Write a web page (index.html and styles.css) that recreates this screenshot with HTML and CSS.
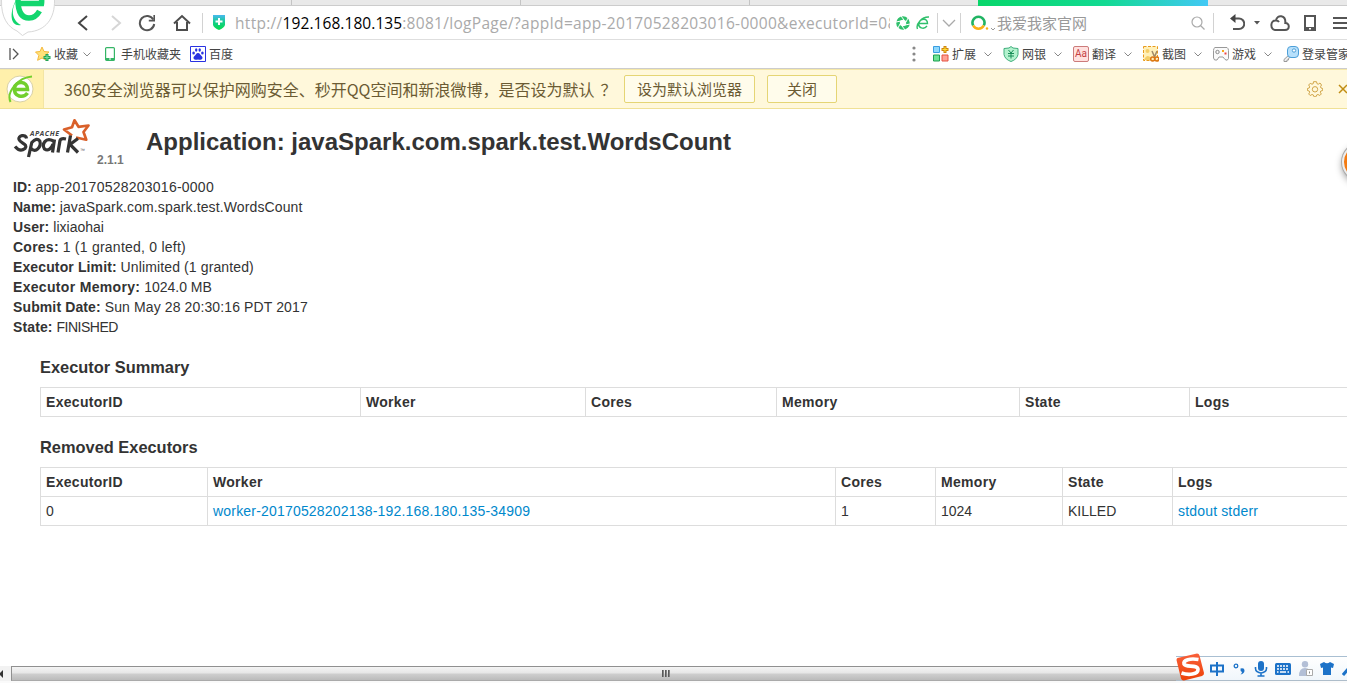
FILE: index.html
```
<!DOCTYPE html>
<html lang="zh-CN">
<head>
<meta charset="utf-8">
<title>Application: javaSpark.com.spark.test.WordsCount</title>
<link rel="stylesheet" href="styles.css">
</head>
<body>
<div class="window">
  <div class="tabstrip"><i></i><i></i><i></i><i></i><b class="progress"></b></div>

  <div class="navbar">
    <svg class="ic" width="14" height="16" viewBox="0 0 14 16" fill="none" stroke="#444" stroke-width="2"><path d="M11 1 3 8l8 7"/></svg>
    <svg class="ic forward" width="12" height="16" viewBox="0 0 12 16" fill="none" stroke="#d6d6d6" stroke-width="2"><path d="m1 1 8 7-8 7"/></svg>
    <svg class="ic reload" width="18" height="18" viewBox="0 0 18 18" fill="none" stroke="#555" stroke-width="2"><path d="M15.300 5.500A7.200 7.200 0 1 0 16.200 10"/><path d="M16.200 1v5.600h-5.400" stroke-width="1.600"/></svg>
    <svg class="ic home" width="18" height="18" viewBox="0 0 18 18" fill="none" stroke="#4d4d4d" stroke-width="2"><path d="M1 9.500 9 2l8 7.500M4 8v8h10V8"/></svg>
    <span class="divider d1"></span>
    <svg class="ic shield" width="12" height="15" viewBox="0 0 12 15"><defs><linearGradient id="sh" x2="0" y2="1"><stop stop-color="#48b8ef"/><stop offset=".5" stop-color="#12ce87"/><stop offset="1" stop-color="#08db4c"/></linearGradient></defs><path d="M0 0h12v10q-1 3-6 5-5-2-6-5z" fill="url(#sh)"/><path d="M6 3v7M2.500 6.500h7" stroke="#fff" stroke-width="2"/></svg>
    <div class="url"><span class="scheme">http://</span><span class="host">192.168.180.135</span><span class="path">:8081/logPage/?appId=app-20170528203016-0000&amp;executorId=0&amp;</span></div>
    <svg class="ic aperture" width="14" height="14" viewBox="0 0 14 14"><circle cx="7" cy="7" r="5" fill="none" stroke="#2fc06b" stroke-width="3.600"/><path d="m5 0 3 4M12 2l-2 4M14 8l-5 1M9 14l-3-4M2 12l2-4M0 6l5-1" stroke="#fff" stroke-width="1"/></svg>
    <svg class="ic eico" width="14" height="14" viewBox="0 0 14 14" fill="none" stroke="#2fc06b" stroke-width="1.400"><path d="M3.500 7.500h8c0-6-7-5-8.500-.500-1.500 5 5 7 8 3M1.500 13C-.500 8 6 .500 13 1"/></svg>
    <span class="divider d2"></span>
    <svg class="ic drop" width="14" height="8" viewBox="0 0 14 8" fill="none" stroke="#aaa" stroke-width="1.300"><path d="m1 1 6 6 6-6"/></svg>
    <span class="divider d3"></span>
    <svg class="ic engine" width="26" height="16" viewBox="0 0 26 16" fill="none" stroke-width="2.600"><path d="M2.200 10.500a6 6 0 1 1 10.600 0" stroke="#20b463"/><path d="M2.200 10.500a6 6 0 0 0 10.600 0" stroke="#fbb116"/><circle cx="16" cy="13.500" r="1.200" fill="#fbb116" stroke="none"/><path d="m20 13 2 2 2-2" stroke="#999" stroke-width="1"/></svg>
    <span class="query">我爱我家官网</span>
    <svg class="ic search" width="14" height="14" viewBox="0 0 14 14" fill="none" stroke="#aaa" stroke-width="1.200"><circle cx="6" cy="6" r="5"/><path d="m9.500 9.500 4 4"/></svg>
    <span class="divider d4"></span>
    <svg class="ic undo" width="15" height="17" viewBox="0 0 15 17" fill="none" stroke="#555" stroke-width="2"><path d="M2 4.500h7a5 5 0 0 1 0 10.500H3"/><path d="M0 4.500 5.500 0v9z" fill="#444" stroke="none"/></svg>
    <svg class="ic caret" width="6" height="4" viewBox="0 0 6 4"><path d="M0 0h6L3 3.500z" fill="#555"/></svg>
    <svg class="ic cloud" width="20" height="16" viewBox="0 0 20 16" fill="none" stroke="#555" stroke-width="2"><path d="M5 15h10c5 0 5-7 .300-7C16 0 7-1 6 5.500 0 5 0 14 5 15ZM6 5.500q2 0 3 1.500"/></svg>
    <svg class="ic phone" width="12" height="16" viewBox="0 0 12 16"><path d="M0 0h12v16H0zM2 2v10h8V2zM5 13v1.500h2V13z" fill="#555" fill-rule="evenodd"/></svg>
    <svg class="ic burger" width="16" height="12" viewBox="0 0 16 12"><path d="M0 1h16M0 6h16M0 11h16" stroke="#555" stroke-width="2"/></svg>
  </div>

  <div class="bookmarks">
    <svg class="ic" width="11" height="12" viewBox="0 0 11 12" fill="none" stroke="#555" stroke-width="1.300"><path d="M1 0v12M4 1l5 5-5 5"/></svg>
    <svg class="ic star" width="16" height="16" viewBox="0 0 16 16"><path d="m7 1 2 4.500 5 .500-3.800 3.300 1.200 5L7 12l-4.400 2.300 1.200-5L.500 6l4.500-.500z" fill="#ffe27a" stroke="#f5b93d"/><path d="M12 8v7M8.500 11.500h7" stroke="#22a458" stroke-width="3"/><path d="M12 9v5M9.500 11.500h5" stroke="#7cdf9e"/></svg>
    <span class="lbl">收藏</span>
    <svg class="ic chev" width="8" height="5" viewBox="0 0 8 5"><path d="m.5.5 3.500 3.500L7.500.5" fill="none" stroke="#888"/></svg>
    <svg class="ic mobile" width="10" height="14" viewBox="0 0 10 14"><rect x=".6" y=".6" width="8.800" height="12.800" rx="1" fill="#fff" stroke="#35b566" stroke-width="1.200"/><path d="M1 11h8v2H1z" fill="#35b566"/><path d="M4 12h2" stroke="#fff"/></svg>
    <span class="lbl">手机收藏夹</span>
    <svg class="ic paw" width="16" height="16" viewBox="0 0 16 16"><path d="M.5.5h15v15H.5z" fill="#fff" stroke="#2932e1"/><g fill="#2932e1"><ellipse cx="3.600" cy="7" rx="1.300" ry="1.600"/><ellipse cx="6.200" cy="4" rx="1.200" ry="1.700"/><ellipse cx="9.700" cy="4" rx="1.200" ry="1.700"/><ellipse cx="12.400" cy="7" rx="1.300" ry="1.600"/><path d="M8 7c2 0 2 2 4 3.500 1.500 2-.500 4-4 3-3.500 1-5.500-1-4-3C6 9 6 7 8 7"/></g></svg>
    <span class="lbl">百度</span>
    <div class="tools">
      <svg class="ic dots" width="4" height="16" viewBox="0 0 4 16" fill="#888"><circle cx="2" cy="2" r="1.600"/><circle cx="2" cy="8" r="1.600"/><circle cx="2" cy="14" r="1.600"/></svg>
      <div class="tool"><svg width="16" height="16" viewBox="0 0 16 16"><path d="M.5.5h6v6h-6z" fill="#8ed8fc" stroke="#3a9de0"/><path d="M.5 9h6v6h-6z" fill="#6be394" stroke="#1f9f50"/><path d="M9 9h6v6H9z" fill="#ffa193" stroke="#e45242"/><path d="M12 0v7M8.500 3.500h7" stroke="#cf850c" stroke-width="3"/><path d="M12 1v5M9.500 3.500h5" stroke="#ffdf36"/></svg><span>扩展</span><svg class="chev" width="8" height="5" viewBox="0 0 8 5"><path d="m.5.5 3.500 3.500L7.500.5" fill="none" stroke="#888"/></svg></div>
      <div class="tool"><svg width="16" height="16" viewBox="0 0 16 16"><path d="m8 .5 2 1.500 5 .5v6q-1 5-7 7-6-2-7-7v-6L6 2z" fill="#b3f2ce" stroke="#3fae7c"/><path d="m5.500 4 2.500 3 2.500-3M5 7.500h6M5 10h6M8 7v5.500" fill="none" stroke="#168d56"/></svg><span>网银</span><svg class="chev" width="8" height="5" viewBox="0 0 8 5"><path d="m.5.5 3.500 3.500L7.500.5" fill="none" stroke="#888"/></svg></div>
      <div class="tool"><span class="aa">Aa</span><span>翻译</span><svg class="chev" width="8" height="5" viewBox="0 0 8 5"><path d="m.5.5 3.500 3.500L7.500.5" fill="none" stroke="#888"/></svg></div>
      <div class="tool"><svg width="16" height="16" viewBox="0 0 16 16"><path d="M.5.5h14v14H.5z" fill="#fff0b8" stroke="#e89a1c" stroke-dasharray="3 1.500"/><circle cx="4.500" cy="5" r="2" fill="#f5ce69"/><path d="M1 14q3-7 7-2v2z" fill="#f5ce69"/><path d="m9 5 3 7M14 5l-3 7" stroke="#a08a67" stroke-width="1.500"/><circle cx="9.700" cy="13" r="2" fill="none" stroke="#dc7815" stroke-width="1.500"/><circle cx="13.800" cy="13" r="2" fill="none" stroke="#dc7815" stroke-width="1.500"/></svg><span>截图</span><svg class="chev" width="8" height="5" viewBox="0 0 8 5"><path d="m.5.5 3.500 3.500L7.500.5" fill="none" stroke="#888"/></svg></div>
      <div class="tool"><svg width="16" height="16" viewBox="0 0 16 16"><path d="M2 1.500h12q1.500 1 1.500 3v8q-1 3-3.500 1l-2-2.500H6L4 14q-3 1-3.500-2V4.500Q.5 2 2 1.500" fill="#fafafa" stroke="#999"/><circle cx="4.500" cy="6" r="1.700" fill="none" stroke="#888"/><path d="M9 4h2v2H9z" fill="#f8a91b"/><path d="M11.500 6.500h2v2h-2z" fill="#e44"/></svg><span>游戏</span><svg class="chev" width="8" height="5" viewBox="0 0 8 5"><path d="m.5.5 3.500 3.500L7.500.5" fill="none" stroke="#888"/></svg></div>
      <div class="tool"><svg width="16" height="16" viewBox="0 0 16 16"><path d="m7 8-6 5.500v2h3V14h1.500v-1.500L9 10" fill="#eee" stroke="#999"/><rect x="4.500" y=".5" width="11" height="11" rx="3.500" fill="#b7e0fb" stroke="#4d9fd8"/><circle cx="11" cy="4.500" r="1.700" fill="#fff" stroke="#4d9fd8"/></svg><span>登录管家</span></div>
    </div>
  </div>

  <div class="notice">
    <div class="brand"><svg width="28" height="30" viewBox="0 0 28 30"><circle cx="14" cy="15" r="13" fill="#fff" stroke="#d9d1a6"/><path d="M9 15.500h12.500C21.500 6.500 10 6.500 8.500 14 7.500 23 17.500 24.500 21.500 19" fill="none" stroke="#72cf2d" stroke-width="3.600"/><path d="M4.500 28C0 18 12 3.500 26 2.500" fill="none" stroke="#72cf2d" stroke-width="2"/></svg></div>
    <span class="msg">360安全浏览器可以保护网购安全、秒开QQ空间和新浪微博，是否设为默认<span class="mark">？</span></span>
    <button class="btn set">设为默认浏览器</button>
    <button class="btn close">关闭</button>
    <svg class="gear" width="16" height="16" viewBox="0 0 16 16" fill="none" stroke="#d0a548"><path d="m6.500.7 3 0 .5 2 1.300.5L13 2l1.500 2-1 1.800.5 1.200 1.700.5v2l-1.900.5-.5 1.200 1 1.800-1.500 1.500-1.800-1-1.400.5-.6 1.800h-2L6.400 14 5 13.500l-1.800 1L1.700 13l1-1.800L2.200 10 .4 9.500v-2L2.200 7l.5-1.200L1.700 4l1.500-1.700L5 3.200l1.200-.5z"/><circle cx="8" cy="8.300" r="2.700"/></svg>
    <svg class="cross" width="10" height="10" viewBox="0 0 10 10"><path d="m1 1 8 8m0-8-8 8" stroke="#c08c12" stroke-width="1.500"/></svg>
  </div>

  <main class="page">
    <header class="title">
      <svg class="spark" width="78" height="40" viewBox="0 0 78 40">
        <path d="M59 17.500 51 11.500 59 9.200 61.500 2.300 65.500 8.800 75.500 7.500 70.500 14 73.300 21.700 63 19.500" fill="none" stroke="#d9602a" stroke-width="2.700" stroke-linejoin="round"/>
        <g fill="none" stroke="#343434" stroke-width="3.200"><path d="M13.500 20.500C13 15.500 4.500 17.500 6 21.500S15.500 26 12 30.500Q7 34.500 2 28.500"/><path d="m15.500 39 3.300-14.500q5-5.500 8-1.500c2 6-4.500 12.500-8.500 7.500"/><path d="M41.500 21.500l-2 13M40.500 23c-8-4.500-12 3.500-9 8 3.500 2.500 7-.500 8.500-5"/><path d="m45 34.500 2-12q1-2.500 6-1.500"/><path d="m54.500 34.500 3-17M65 20.500 57 26.500 65 34.500"/></g>
        <text class="apache" x="17" y="18" textLength="29">APACHE</text><text class="tm" x="67" y="34">™</text>
      </svg>
      <span class="version">2.1.1</span>
      <h3>Application: javaSpark.com.spark.test.WordsCount</h3>
    </header>
    <ul class="facts">
      <li><strong>ID:</strong> <span class="wide">app-20170528203016-0000</span></li>
      <li><strong>Name:</strong> <span class="slight">javaSpark.com.spark.test.WordsCount</span></li>
      <li><strong class="slight">User:</strong> <span>lixiaohai</span></li>
      <li><strong class="wide">Cores:</strong> <span class="wide">1 (1 granted, 0 left)</span></li>
      <li><strong class="slight">Executor Limit:</strong> <span class="slight">Unlimited (1 granted)</span></li>
      <li><strong class="wider">Executor Memory:</strong> <span>1024.0 MB</span></li>
      <li><strong class="slight">Submit Date:</strong> <span class="slight">Sun May 28 20:30:16 PDT 2017</span></li>
      <li><strong class="slight">State:</strong> <span class="tight">FINISHED</span></li>
    </ul>
    <section class="tables">
      <h4>Executor Summary</h4>
      <table class="summary">
        <colgroup><col><col><col><col><col><col></colgroup>
        <tr><th>ExecutorID</th><th>Worker</th><th>Cores</th><th>Memory</th><th>State</th><th>Logs</th></tr>
      </table>
      <h4>Removed Executors</h4>
      <table class="removed">
        <colgroup><col><col><col><col><col><col></colgroup>
        <tr><th>ExecutorID</th><th>Worker</th><th>Cores</th><th>Memory</th><th>State</th><th>Logs</th></tr>
        <tr><td>0</td><td><a>worker-20170528202138-192.168.180.135-34909</a></td><td>1</td><td>1024</td><td>KILLED</td><td><a>stdout</a> <a>stderr</a></td></tr>
      </table>
    </section>
  </main>

  <div class="scrollbar">
    <div class="arrow"><svg width="4" height="8" viewBox="0 0 4 8"><path d="M3 0v8L-1 4z" fill="#333"/></svg></div>
    <div class="thumb"><i></i><i></i><i></i></div>
  </div>

  <svg class="bubble" width="58" height="38" viewBox="0 0 58 38">
    <path d="M1.500 0C1 18 8 27 17 31l5.500 4.500L28 32C46 31 55 18 54.500 0" fill="#fff" stroke="#d8d8d8"/>
    <path d="M20 3.500h21.500c.300-2 .300-3 0-5M18 0c0 14 5 18 11 18 5 0 8-2.500 10.500-7" fill="none" stroke="#12d66e" stroke-width="5.500"/>
    <path d="M17 0C11 8 11 20 21 25 11 27 9 15 15 2z" fill="#12d66e"/>
  </svg>
  <div class="float-ball"></div>
  <div class="ime">
    <svg class="sogou" width="30" height="30" viewBox="0 0 30 30"><defs><linearGradient id="so" x2="0" y2="1"><stop stop-color="#f9603a"/><stop offset="1" stop-color="#ed4208"/></linearGradient></defs><path d="M1.500 6 21 1.500q2 0 2.500 2L28 21q.300 2-2 3L8 28.500q-2 .500-3-2L.500 8q0-1.500 1-2" fill="url(#so)"/><path d="M22.500 7.500C14 6 7 8 8 12c1.500 4 14 0 14 5.500 0 5-9.500 6-16.500 3.500" fill="none" stroke="#fff" stroke-width="3.600"/></svg>
    <svg class="zh" width="16" height="14" viewBox="0 0 16 14" fill="none" stroke="#1c72c8" stroke-width="2"><path d="M2 3.500h12v6H2zM8 0v14"/></svg>
    <svg class="punc" width="12" height="12" viewBox="0 0 12 12"><circle cx="3" cy="3" r="1.800" fill="none" stroke="#1c72c8" stroke-width="1.300"/><path d="M7.500 5.500q4-1 4 2 0 3-4 4 1.500-1.500 1.500-2.500-2-1-1.500-3.500" fill="#1c72c8"/></svg>
    <svg class="mic" width="14" height="16" viewBox="0 0 14 16"><rect x="4" width="6" height="10" rx="3" fill="#1c72c8"/><path d="M1.500 6v1.500a5.500 4.500 0 0 0 11 0V6M7 12v3M3.500 15h7" fill="none" stroke="#1c72c8" stroke-width="1.600"/></svg>
    <svg class="kbd" width="16" height="12" viewBox="0 0 16 12"><rect width="16" height="12" rx="1.500" fill="#1c72c8"/><path d="M2 3h12M2 6h12" stroke="#fff" stroke-width="1.500" stroke-dasharray="2 1"/><path d="M2 9h1.500M5 9h6M12.500 9H14" stroke="#fff" stroke-width="1.500"/></svg>
    <svg class="user" width="14" height="15" viewBox="0 0 14 15"><circle cx="6" cy="3.300" r="3.200" fill="#b3bfd6"/><path d="M0 15q0-8 6-8t6 8z" fill="#b3bfd6"/><path d="M7.500 8.500h6v6h-6z" fill="#fff" stroke="#aaa"/><path d="M10 10.500v2h1v-2z" fill="#888"/></svg>
    <svg class="shirt" width="14" height="13" viewBox="0 0 14 13"><path d="M0 2 4 0q3 2.500 6 0l4 2-1 4-2-.500V13H3V5.500L1 6z" fill="#1c72c8"/></svg>
    <svg class="wrench" width="6" height="14" viewBox="0 0 6 14"><path d="m1 13 6-7" stroke="#1c72c8" stroke-width="3"/></svg>
  </div>
</div>
</body>
</html>
```
FILE: styles.css
```
* { box-sizing: border-box; }
body { margin: 0; }
.window {
  position: relative;
  display: flex;
  flex-direction: column;
  width: 1347px;
  height: 683px;
  overflow: hidden;
  background: #fff;
  font-family: "Liberation Sans", "Noto Sans CJK SC", sans-serif;
}
svg { display: block; flex: none; }

/* browser chrome */
.tabstrip { display: flex; height: 6px; flex: none; background: #e9e9e9; border-bottom: 1px solid #ccc; }
.tabstrip i { width: 229px; border-right: 1px solid #c4c4c4; }
.tabstrip i:first-child { width: 292px; }
.tabstrip i:nth-child(4) { width: 228px; border: 0; }
.progress { width: 230px; height: 6px; background: linear-gradient(90deg, #08d66a, #12da92 55%, #42c8f5); }

.navbar { display: flex; align-items: center; height: 34px; flex: none; padding-left: 76px; border-bottom: 1px solid #dedede; }
.navbar > *, .notice > * { flex-shrink: 0; }
.forward { margin-left: 21px; }
.reload { margin-left: 15px; }
.home { margin-left: 17px; }
.divider { width: 1px; height: 20px; background: #d2d2d2; }
.d1 { margin-left: 11px; }
.shield { margin-left: 10px; }
.url { width: 655px; height: 24px; margin-left: 10px; overflow: hidden; white-space: nowrap; font: 15.500px/24px "Open Sans", sans-serif; color: #aaa; }
.scheme, .path { letter-spacing: .3px; }
.host { color: #000; letter-spacing: .07px; }
.aperture { margin-left: 6px; }
.eico { margin-left: 6px; }
.d2 { margin-left: 7px; }
.drop { margin-left: 4px; }
.d3 { margin-left: 4px; }
.engine { margin-left: 10px; }
.query { width: 90px; margin-left: 0; font: 15px/20px "Noto Sans CJK SC", sans-serif; color: #999; white-space: nowrap; }
.search { margin-left: 104px; }
.d4 { margin-left: 8px; }
.undo { margin-left: 16px; }
.caret { margin-left: 9px; }
.cloud { margin-left: 10px; }
.phone { margin-left: 14px; }
.burger { margin-left: 17px; }

.bookmarks { display: flex; align-items: center; height: 29px; flex: none; padding-left: 9px; border-bottom: 1px solid #ccc; font: 12px/18px "Noto Sans CJK SC", sans-serif; color: #444; white-space: nowrap; }
.star { margin: 0 3px 0 15px; }
.bookmarks .chev { margin-left: 5px; }
.mobile { margin: 0 6px 0 14px; }
.paw { margin: 0 3px 0 9px; }
.tools { display: flex; align-items: center; margin-left: 679px; }
.dots { margin-right: 17px; }
.tool { display: flex; align-items: center; width: 70px; flex: none; gap: 3px; }
.bookmarks .tool .chev { margin-left: 5px; }
.aa { width: 16px; height: 16px; border: 1px solid #cc7b7b; border-radius: 2px; background: #ffe1df; color: #c63f42; font: 10px/14px Roboto, sans-serif; text-align: center; }

.notice { display: flex; align-items: center; height: 40px; flex: none; background: #fff8db; border-top: 1px solid #f5e8a8; border-bottom: 1px solid #f0e196; font: 16px/24px "Noto Sans CJK SC", sans-serif; color: #6b5b33; }
.brand { display: flex; align-items: center; width: 44px; height: 38px; padding-left: 6px; background: #fff0ab; border-right: 1px solid #f3e5a3; }
.msg { width: 560px; margin-left: 20px; white-space: nowrap; }
.mark { padding-left: 6px; }
.btn { height: 28px; padding: 0; background: #fffceb; border: 1px solid #e5d574; border-radius: 2px; font: 15px/24px "Noto Sans CJK SC", sans-serif; color: #6b5b33; }
.set { width: 131px; }
.close { width: 70px; margin-left: 12px; }
.gear { margin-left: 470px; }
.cross { margin-left: 15px; }

/* Spark application page */
.page { flex: 1; min-height: 0; color: #333; font-size: 14px; line-height: 20px; }
.title { display: flex; height: 68px; padding: 9px 0 0 13px; }
.apache { font: italic bold 7px "Open Sans", sans-serif; fill: #444; }
.tm { font: 5px "Liberation Sans", sans-serif; fill: #555; }
.version { width: 28px; margin: 32px 0 0 6px; font-size: 12px; font-weight: bold; color: #777; }
h3 { margin: 4px 0 0 21px; font-size: 24px; line-height: 40px; white-space: nowrap; }
.version, h3 { flex: none; }
.facts { margin: 0; padding: 0 0 0 13px; list-style: none; }
.slight { letter-spacing: .12px; }
.wide { letter-spacing: .24px; }
.wider { letter-spacing: .32px; }
.tight { letter-spacing: -.5px; }
.tables { padding-left: 40px; }
h4 { margin: 0; padding-top: 20px; height: 50px; font-size: 16.400px; line-height: 20px; }
table { width: 1347px; table-layout: fixed; border-collapse: collapse; font-size: 14px; line-height: 20px; }
th, td { height: 29px; padding: 4px 5px; border: 1px solid #ddd; text-align: left; white-space: nowrap; }
th { letter-spacing: .3px; }
a { color: #08c; letter-spacing: .19px; }
.summary col:nth-child(1) { width: 320px; }
.summary col:nth-child(2) { width: 225px; }
.summary col:nth-child(3) { width: 191px; }
.summary col:nth-child(4) { width: 243px; }
.summary col:nth-child(5) { width: 170px; }
.removed col:nth-child(1) { width: 167px; }
.removed col:nth-child(2) { width: 628px; }
.removed col:nth-child(3) { width: 100px; }
.removed col:nth-child(4) { width: 127px; }
.removed col:nth-child(5) { width: 110px; }

/* horizontal scrollbar */
.scrollbar { display: flex; height: 17px; flex: none; background: #f2f2f2; border-bottom: 2px solid #fafafa; }
.arrow { display: flex; align-items: center; width: 11px; }
.thumb { display: flex; flex: 1; align-items: center; justify-content: center; gap: 1px; padding: 0 27px 1px 0; border: 1px solid #909090; border-bottom-color: #aaa; border-right: 0; background: linear-gradient(#f4f4f4, #e6e6e6 48%, #cfcfcf 52%, #bbb); }
.thumb i { width: 2px; height: 7px; background: linear-gradient(90deg, #444, #999); }

/* overlays */
.bubble { position: absolute; left: 0; top: 0; }
.float-ball { position: absolute; left: 1342px; top: 143px; width: 38px; height: 38px; border: 2px solid #eee; border-radius: 50%; background: #f47b12; box-shadow: 0 0 0 1px #aaa, 0 3px 7px #999; }
.ime { position: absolute; left: 1176px; top: 656px; display: flex; align-items: center; width: 171px; height: 25px; background: linear-gradient(#fff, #f0f6fb) 10px 0 no-repeat; border-top: 1px solid #a9bfd2; border-bottom: 1px solid #aebdca; }
.sogou { margin-top: -4px; }
.zh { margin-left: 3px; }
.punc { margin-left: 8px; }
.mic { margin-left: 9px; }
.kbd { margin-left: 7px; }
.user { margin-left: 8px; }
.shirt { margin-left: 7px; }
.wrench { margin-left: 8px; }
```
